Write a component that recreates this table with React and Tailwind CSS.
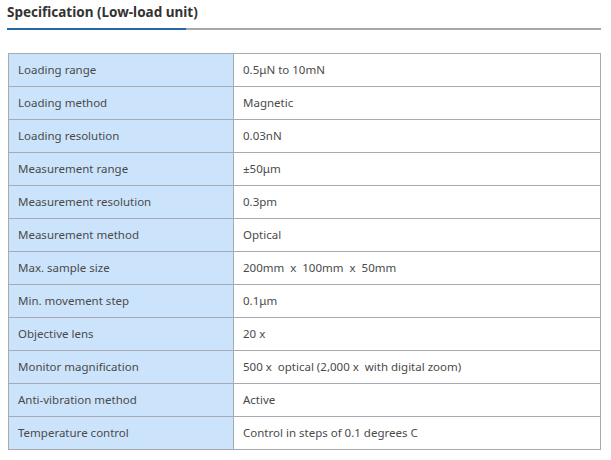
const rows = [
  ["Loading range", "0.5μN to 10mN"],
  ["Loading method", "Magnetic"],
  ["Loading resolution", "0.03nN"],
  ["Measurement range", "±50μm"],
  ["Measurement resolution", "0.3pm"],
  ["Measurement method", "Optical"],
  ["Max. sample size", "200mm  x  100mm  x  50mm"],
  ["Min. movement step", "0.1μm"],
  ["Objective lens", "20 x"],
  ["Monitor magnification", "500 x  optical (2,000 x  with digital zoom)"],
  ["Anti-vibration method", "Active"],
  ["Temperature control", "Control in steps of 0.1 degrees C"],
];

export default function App() {
  return (
    <div className="w-[611px] h-[460px] bg-white text-[#4a4a4a] pl-[7px] pr-[10px]" style={{ fontFamily: '"Noto Sans", "DejaVu Sans", sans-serif' }}>
      <div className="pt-[2px] h-[28px] text-[13.5px] font-bold text-[#333] leading-[20px]">Specification (Low-load unit)</div>
      <div className="flex h-[2px] w-[594px]">
        <div className="w-[179px] bg-[#2568a8]"></div>
        <div className="flex-1 bg-[#a8a8a8]"></div>
      </div>
      <table className="mt-[23px] ml-[1px] w-[593px] border-collapse text-[11.5px]">
        <tbody>
          {rows.map(([k, v]) => (
            <tr key={k} className="h-[33px]">
              <td className="w-[225px] border border-[#a9a9b3] bg-[#cce4fb] pl-[9px] align-middle">{k}</td>
              <td className="border border-[#a9a9b3] bg-white pl-[9px] align-middle whitespace-pre">{v}</td>
            </tr>
          ))}
        </tbody>
      </table>
    </div>
  );
}
